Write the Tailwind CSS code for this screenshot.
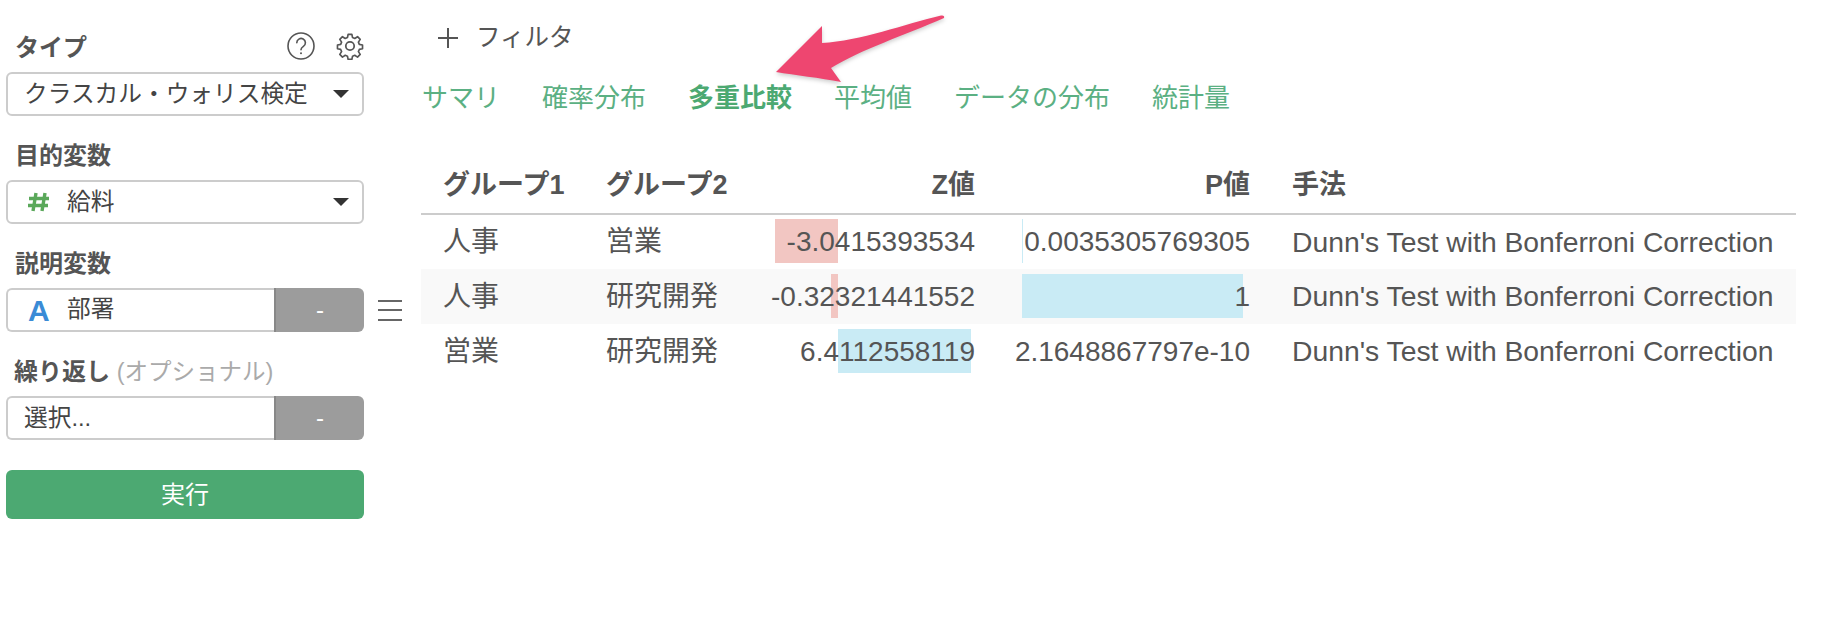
<!DOCTYPE html>
<html lang="ja">
<head>
  <meta charset="UTF-8" />
  <title>多重比較</title>
  <script src="https://cdn.jsdelivr.net/npm/@tailwindcss/browser@4"></script>
</head>
<body class="relative h-[634px] overflow-hidden bg-white text-[#555] font-['Liberation_Sans','Noto_Sans_CJK_JP',sans-serif]">
  <div class="flex">
    <!-- Sidebar -->
    <aside class="ml-[6px] w-[358px] pt-[28px] shrink-0">
      <div class="flex items-center justify-between h-[36px] mb-[8px]">
        <label class="ml-[9px] pt-[3px] text-[24px] font-bold">タイプ</label>
        <div class="flex items-center gap-[20px]">
          <svg width="30" height="30" viewBox="0 0 30 30" fill="none" stroke="#555" stroke-width="1.6">
            <circle cx="15" cy="15" r="13" />
            <path d="M10.8 11.8a4.3 4.3 0 1 1 6.6 3.6c-1.5 1-2.4 1.7-2.4 3.4" stroke-linecap="round" />
            <circle cx="15" cy="22.2" r="1" fill="#555" stroke="none" />
          </svg>
          <svg width="28" height="28" viewBox="0 0 24 24" fill="none" stroke="#555" stroke-width="1.5" stroke-linejoin="round">
            <circle cx="12" cy="12" r="3.6" />
            <path d="M10.3 1.5h3.4l.6 2.9 2 .8 2.5-1.6 2.4 2.4-1.6 2.5.8 2 2.9.6v3.4l-2.9.6-.8 2 1.6 2.5-2.4 2.4-2.5-1.6-2 .8-.6 2.9h-3.4l-.6-2.9-2-.8-2.5 1.6-2.4-2.4 1.6-2.5-.8-2-2.9-.6v-3.4l2.9-.6.8-2-1.6-2.5 2.4-2.4 2.5 1.6 2-.8z" transform="translate(.6 .6) scale(.95)" />
          </svg>
        </div>
      </div>
      <div class="flex items-center justify-between h-[44px] mb-[20px] pl-[16px] pr-[18px] pt-[1px] border-2 border-[#ccc] rounded-[6px]">
        <span class="text-[23.7px] text-[#444]">クラスカル・ウォリス検定</span>
        <span class="-mr-[5px] -mt-[1px] w-0 h-0 border-x-[8px] border-x-transparent border-t-[8px] border-t-[#333]"></span>
      </div>

      <label class="block ml-[9px] h-[36px] leading-[39px] mb-[8px] text-[24px] font-bold">目的変数</label>
      <div class="flex items-center justify-between h-[44px] mb-[20px] pl-[20px] pr-[18px] border-2 border-[#ccc] rounded-[6px]">
        <span class="flex items-center text-[23.7px] text-[#444]">
          <svg class="mr-[17px]" width="22" height="20" viewBox="0 0 22 20" fill="none" stroke="#5aa85a" stroke-width="3.4"><path d="M8 1 5 19M17 1l-3 18M1 6.5h20M0 13.5h20" /></svg>
          <span class="pt-[1px]">給料</span>
        </span>
        <span class="-mr-[5px] w-0 h-0 border-x-[8px] border-x-transparent border-t-[8px] border-t-[#333]"></span>
      </div>

      <label class="block ml-[9px] h-[36px] leading-[39px] mb-[8px] text-[24px] font-bold">説明変数</label>
      <div class="flex gap-[14px] w-[398px] mb-[20px]">
        <div class="flex w-[358px] h-[44px] shrink-0">
          <div class="flex items-center flex-1 pl-[20px] border-2 border-r-0 border-[#ccc] rounded-l-[6px] text-[23.7px] text-[#444]">
            <span class="w-[39px] text-[30px] font-bold text-[#3a8bd6]">A</span><span>部署</span>
          </div>
          <button class="w-[90px] bg-[#9c9c9c] border-l-2 border-[#888] rounded-r-[6px] text-white text-[24px]">-</button>
        </div>
        <div class="flex flex-col justify-center gap-[7.5px] w-[24px] shrink-0">
          <span class="h-[2px] bg-[#666]"></span>
          <span class="h-[2px] bg-[#666]"></span>
          <span class="h-[2px] bg-[#666]"></span>
        </div>
      </div>

      <label class="block ml-[8px] h-[36px] leading-[39px] mb-[8px] text-[24px] font-bold">繰り返し <span class="font-normal text-[23.5px] text-[#aaa]">(オプショナル)</span></label>
      <div class="flex h-[44px]">
        <div class="flex items-center flex-1 pl-[16px] pt-[1px] border-2 border-r-0 border-[#ccc] rounded-l-[6px] text-[23.7px] text-[#444]">選択...</div>
        <button class="w-[90px] bg-[#9c9c9c] border-l-2 border-[#888] rounded-r-[6px] text-white text-[24px]">-</button>
      </div>

      <button class="mt-[30px] w-full h-[49px] rounded-[6px] bg-[#4ca972] text-white text-[24px]">実行</button>
    </aside>

    <!-- Main -->
    <main class="ml-[57px] w-[1375px]">
      <div class="flex items-center h-[50px] mt-[13px] pl-[17px] text-[24.5px]">
        <svg width="20" height="20" viewBox="0 0 20 20" stroke="#555" stroke-width="2"><path d="M0 10h20M10 0v20" /></svg>
        <span class="ml-[18px]">フィルタ</span>
      </div>
      <nav class="flex gap-[42px] h-[36px] mt-[17px] leading-[37px] text-[26px] text-[#5bb083] pl-[1px]">
        <span>サマリ</span>
        <span>確率分布</span>
        <span class="font-bold text-[#4ca972]">多重比較</span>
        <span>平均値</span>
        <span>データの分布</span>
        <span>統計量</span>
      </nav>

      <table class="mt-[39px] w-[1375px] table-fixed border-collapse text-[28px]">
        <colgroup>
          <col class="w-[164px]" />
          <col class="w-[186px]" />
          <col class="w-[225px]" />
          <col class="w-[275px]" />
          <col />
        </colgroup>
        <thead>
          <tr class="h-[59px] border-b-2 border-[#ccc] text-[27px] font-bold">
            <th class="pl-[22px] pt-[3px] text-left">グループ1</th>
            <th class="pl-[21px] pt-[3px] text-left">グループ2</th>
            <th class="pr-[21px] pt-[3px] text-right">Z値</th>
            <th class="pr-[21px] pt-[3px] text-right">P値</th>
            <th class="pl-[21px] pt-[3px] text-left">手法</th>
          </tr>
        </thead>
        <tbody>
          <tr class="h-[55px]">
            <td class="pl-[22px]">人事</td>
            <td class="pl-[21px]">営業</td>
            <td class="relative pr-[21px] text-right">
              <span class="absolute left-[4px] top-[4px] w-[63px] h-[44px] bg-[#f2c6c2]"></span>
              <span class="relative">-3.0415393534</span>
            </td>
            <td class="relative pr-[21px] text-right">
              <span class="absolute left-[26px] top-[4px] w-[1px] h-[44px] bg-[#c9ebf5]"></span>
              <span class="relative">0.0035305769305</span>
            </td>
            <td class="pl-[21px] text-[28.3px] whitespace-nowrap">Dunn's Test with Bonferroni Correction</td>
          </tr>
          <tr class="h-[55px] bg-[#f9f9f9]">
            <td class="pl-[22px]">人事</td>
            <td class="pl-[21px]">研究開発</td>
            <td class="relative pr-[21px] text-right">
              <span class="absolute left-[60px] top-[5px] w-[7px] h-[44px] bg-[#f2c6c2]"></span>
              <span class="relative">-0.32321441552</span>
            </td>
            <td class="relative pr-[21px] text-right">
              <span class="absolute left-[26px] top-[5px] w-[221px] h-[44px] bg-[#c9ebf5]"></span>
              <span class="relative">1</span>
            </td>
            <td class="pl-[21px] text-[28.3px] whitespace-nowrap">Dunn's Test with Bonferroni Correction</td>
          </tr>
          <tr class="h-[55px]">
            <td class="pl-[22px]">営業</td>
            <td class="pl-[21px]">研究開発</td>
            <td class="relative pr-[21px] text-right">
              <span class="absolute left-[67px] top-[5px] w-[133px] h-[44px] bg-[#c9ebf5]"></span>
              <span class="relative">6.4112558119</span>
            </td>
            <td class="pr-[21px] text-right">2.1648867797e-10</td>
            <td class="pl-[21px] text-[28.3px] whitespace-nowrap">Dunn's Test with Bonferroni Correction</td>
          </tr>
        </tbody>
      </table>
    </main>
  </div>

  <!-- Annotation arrow -->
  <svg class="absolute left-[770px] top-[10px] drop-shadow-[0_2px_2px_rgba(0,0,0,0.2)]" width="185" height="80" viewBox="770 10 185 80">
    <path d="M776 72 L822 26 L822 43 C860 41 905 24 941 15.5 Q945 15 944 18 C905 35 860 50 831 68 L841 82 C820 78 795 75 776 72 Z" fill="#ee4670" />
  </svg>
</body>
</html>
